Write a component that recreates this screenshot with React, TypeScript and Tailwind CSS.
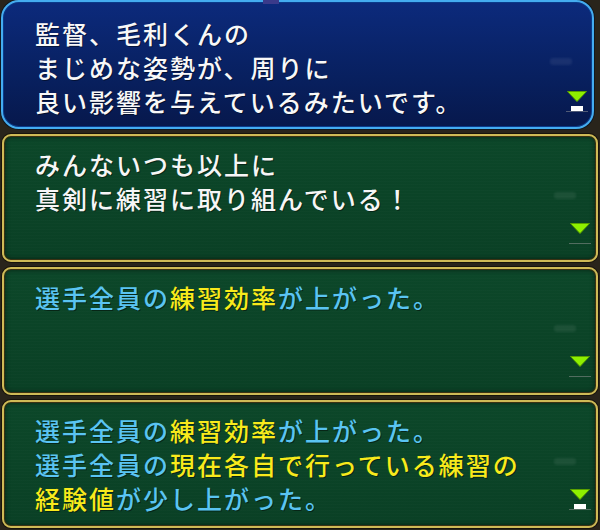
import React from "react";

const Arrow = ({ bar }: { bar: boolean }) => (
  <div className="absolute right-[5px] bottom-[16px] flex flex-col items-center w-[22px]">
    <svg width="20" height="11" viewBox="0 0 20 11">
      <polygon points="0.5,0.5 19.5,0.5 10,10.5" fill="#8ef000" stroke="#5aa000" strokeWidth="1" />
    </svg>
    <div className={bar ? "mt-[4px] w-[12px] h-[5px] bg-white" : "mt-[4px] w-[12px] h-[5px] bg-transparent"} />
    <div className="w-[22px] h-[1px] bg-[#9a9a9a]/50" />
  </div>
);

const Smudge = () => (
  <div className="absolute right-[20px] top-[56px] w-[22px] h-[7px] rounded-[3px] bg-white/[0.07] blur-[1px]" />
);

const B = ({ children }: { children: React.ReactNode }) => (
  <span className="text-[#5ac4f2]">{children}</span>
);
const Y = ({ children }: { children: React.ReactNode }) => (
  <span className="text-[#f8ea1c]">{children}</span>
);

const textCls =
  "font-['Noto_Sans_CJK_JP','Noto_Sans_CJK_SC',sans-serif] text-[25px] leading-[34px] tracking-[2px] font-medium [text-shadow:1px_1px_0_rgba(0,0,0,0.45)]";

const GreenPanel = ({ children, bar }: { children: React.ReactNode; bar: boolean }) => (
  <div className="relative mx-[2px] h-[128px] rounded-[9px] border-2 border-[#cfba56] bg-[linear-gradient(180deg,#0c4729_0%,#0a4025_100%)] shadow-[inset_0_0_0_1px_#3a3010,inset_0_0_4px_2px_rgba(0,0,0,0.35),0_0_0_1px_#17130b]">
    <div className="absolute inset-0 rounded-[7px] bg-[repeating-linear-gradient(180deg,rgba(255,255,255,0.012)_0px,rgba(255,255,255,0.012)_1px,transparent_1px,transparent_3px)]" />
    <div className={`relative pl-[31px] pt-[11px] text-[#f6f6f6] ${textCls}`}>{children}</div>
    <Smudge />
    <Arrow bar={bar} />
  </div>
);

export default function App() {
  return (
    <div className="w-[600px] h-[530px] bg-[#29241b] flex flex-col gap-[5px] overflow-hidden">
      <div className="relative ml-[1px] mr-[6px] h-[129px] rounded-[18px] border-2 border-[#44acf0] bg-[linear-gradient(180deg,#0c2a7c_0%,#08205f_60%,#07184c_100%)] shadow-[inset_0_0_0_1px_#0a3a8a,0_0_0_1px_#101820]">
        <div className="absolute left-[260px] -top-[2px] w-[16px] h-[4px] bg-[#3a3a8a]" />
        <div className={`pl-[32px] pt-[14px] text-[#f8f8f8] ${textCls}`}>
          <div>監督、毛利くんの</div>
          <div>まじめな姿勢が、周りに</div>
          <div>良い影響を与えているみたいです。</div>
        </div>
        <Smudge />
        <div className="absolute right-[4px] bottom-[15px]">
          <div className="flex flex-col items-center w-[22px]">
            <svg width="20" height="11" viewBox="0 0 20 11">
              <polygon points="0.5,0.5 19.5,0.5 10,10.5" fill="#8ef000" stroke="#5aa000" strokeWidth="1" />
            </svg>
            <div className="mt-[4px] w-[12px] h-[5px] bg-white" />
            <div className="w-[22px] h-[1px] bg-[#9a9a9a]/50" />
          </div>
        </div>
      </div>

      <GreenPanel bar={false}>
        <div>みんないつも以上に</div>
        <div>真剣に練習に取り組んでいる！</div>
      </GreenPanel>

      <GreenPanel bar={false}>
        <div>
          <B>選手全員の</B>
          <Y>練習効率</Y>
          <B>が上がった。</B>
        </div>
      </GreenPanel>

      <GreenPanel bar={true}>
        <div>
          <B>選手全員の</B>
          <Y>練習効率</Y>
          <B>が上がった。</B>
        </div>
        <div>
          <B>選手全員の</B>
          <Y>現在各自で行っている練習の</Y>
        </div>
        <div>
          <Y>経験値</Y>
          <B>が少し上がった。</B>
        </div>
      </GreenPanel>
    </div>
  );
}
